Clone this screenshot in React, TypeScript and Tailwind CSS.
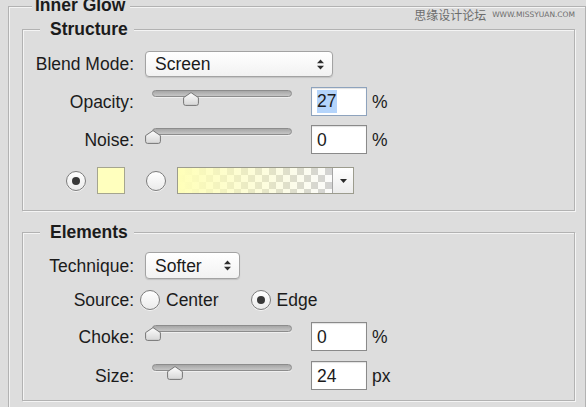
import React from "react";

const ETCH = "border border-[#b2b2b2] shadow-[inset_1px_1px_0_#f4f4f4,1px_1px_0_#f4f4f4]";

function Label({ children }: { children: React.ReactNode }) {
  return <span className="w-[111px] shrink-0 text-right">{children}</span>;
}

function Arrows() {
  return (
    <svg width="7" height="11" viewBox="0 0 7 11" className="shrink-0">
      <path d="M0 4.2 L3.5 0.5 L7 4.2 Z M0 6.8 L3.5 10.5 L7 6.8 Z" fill="#2e2e2e" />
    </svg>
  );
}

function Select({ value, width, height }: { value: string; width: string; height: string }) {
  return (
    <div
      className={`ml-[11px] flex ${width} ${height} items-center justify-between rounded-[4px] border border-[#a3a3a3] bg-gradient-to-b from-white to-[#f2f2f2] pl-[9px] pr-[8px] shadow-[0_1px_1px_rgba(0,0,0,0.12)]`}
    >
      <span>{value}</span>
      <Arrows />
    </div>
  );
}

function Thumb({ left }: { left: number }) {
  return (
    <svg width="16" height="14" viewBox="0 0 16 14" className="absolute top-[1px]" style={{ left: left - 8 }}>
      <defs>
        <linearGradient id="thumbFill" x1="0" y1="0" x2="0" y2="1">
          <stop offset="0" stopColor="#fdfdfd" />
          <stop offset="1" stopColor="#d6d6d6" />
        </linearGradient>
      </defs>
      <path
        d="M8 0.6 L15.4 5.6 V11.4 Q15.4 13.4 13.4 13.4 H2.6 Q0.6 13.4 0.6 11.4 V5.6 Z"
        fill="url(#thumbFill)"
        stroke="#757575"
        strokeWidth="1"
      />
    </svg>
  );
}

function Slider({ pos }: { pos: number }) {
  return (
    <div className="self-start pl-[18px] pr-[19px] pt-[3px]">
      <div className="relative h-[7px] w-[140px] rounded-full border border-[#8c8c8c] bg-gradient-to-b from-[#a6a6a6] to-[#c6c6c6] shadow-[0_1px_0_#efefef]">
        <Thumb left={pos} />
      </div>
    </div>
  );
}

function NumBox({ value, focused }: { value: string; focused?: boolean }) {
  return (
    <div
      className={`flex h-[29px] w-[56px] shrink-0 items-center bg-white pl-[5px] shadow-[inset_0_1px_1px_rgba(0,0,0,0.12)] ${
        focused ? "border border-[#8ea3bd]" : "border border-[#8a8a8a]"
      }`}
    >
      <span className={focused ? "bg-[#b4d4fb] pr-[1px] leading-[23px]" : ""}>{value}</span>
    </div>
  );
}

function SliderRow({ label, pos, value, unit, focused, className }: {
  label: string;
  pos: number;
  value: string;
  unit: string;
  focused?: boolean;
  className: string;
}) {
  return (
    <div className={`flex items-center ${className}`}>
      <Label>{label}</Label>
      <Slider pos={pos} />
      <NumBox value={value} focused={focused} />
      <span className="ml-[5px]">{unit}</span>
    </div>
  );
}

function Radio({ on }: { on?: boolean }) {
  return (
    <span className="flex h-[20px] w-[20px] shrink-0 items-center justify-center rounded-full border border-[#7c7c7c] bg-gradient-to-b from-white to-[#ebebeb] shadow-[0_1px_0_rgba(255,255,255,0.7)]">
      {on && <span className="h-[8px] w-[8px] rounded-full bg-[#383838]" />}
    </span>
  );
}

export default function App() {
  return (
    <div className="relative h-[407px] w-[586px] overflow-hidden bg-[#dddddd] pl-[8px] font-['Liberation_Sans',Arial,sans-serif] text-[17.5px] leading-[20px] text-[#1b1b1b]">
      {/* watermark */}
      <div className="absolute right-[11px] top-[7px] flex items-center gap-[6px] text-[#6c6c6c]">
        <span className="font-['Noto_Sans_CJK_SC',sans-serif] text-[12px] leading-[16px]">思缘设计论坛</span>
        <span className="font-['DejaVu_Sans',sans-serif] text-[7.5px] leading-[16px]">WWW.MISSYUAN.COM</span>
      </div>

      <fieldset className={`-mt-[5px] pb-[20px] pl-[13px] pr-[10px] ${ETCH}`}>
        <legend className="ml-[10px] bg-[#dddddd] pb-[2px] pl-[3px] pr-[5px] font-bold">Inner Glow</legend>

        {/* Structure */}
        <fieldset className={`mt-[2px] ${ETCH}`}>
          <legend className="ml-[17px] bg-[#dddddd] pl-[10px] pr-[6px] font-bold">Structure</legend>
          <div className="flex flex-col pb-[16px] pt-[12px]">
            <div className="flex h-[26px] items-center">
              <Label>Blend Mode:</Label>
              <Select value="Screen" width="w-[188px]" height="h-[26px]" />
            </div>
            <SliderRow className="mt-[10px]" label="Opacity:" pos={38} value="27" unit="%" focused />
            <SliderRow className="mt-[9px]" label="Noise:" pos={0} value="0" unit="%" />
            <div className="mt-[13px] flex h-[27px] items-center">
              <span className="ml-[43px]">
                <Radio on />
              </span>
              <span className="ml-[11px] h-[27px] w-[28px] border border-[#a5a58f] bg-[#ffffbe]" />
              <span className="ml-[21px]">
                <Radio />
              </span>
              <div className="ml-[11px] flex h-[27px] w-[177px] border border-[#9c9c8e]">
                <span className="flex-1 [background:linear-gradient(to_right,#ffffb8,rgba(255,255,184,0.55)_45%,rgba(255,255,184,0)),conic-gradient(#d2d2d2_25%,#fbfbfb_0_50%,#d2d2d2_0_75%,#fbfbfb_0)_0_0/14px_14px]" />
                <span className="flex w-[21px] items-center justify-center border-l border-[#a5a5a5] bg-gradient-to-b from-white to-[#ececec]">
                  <svg width="7" height="4" viewBox="0 0 7 4">
                    <path d="M0 0 L7 0 L3.5 4 Z" fill="#2a2a2a" />
                  </svg>
                </span>
              </div>
            </div>
          </div>
        </fieldset>

        {/* Elements */}
        <fieldset className={`mt-[11px] ${ETCH}`}>
          <legend className="ml-[17px] bg-[#dddddd] pl-[10px] pr-[6px] font-bold">Elements</legend>
          <div className="flex flex-col pb-[10px] pt-[10px]">
            <div className="flex h-[27px] items-center">
              <Label>Technique:</Label>
              <Select value="Softer" width="w-[95px]" height="h-[27px]" />
            </div>
            <div className="mt-[10px] flex h-[22px] items-center">
              <Label>Source:</Label>
              <span className="ml-[6px]">
                <Radio />
              </span>
              <span className="ml-[6px]">Center</span>
              <span className="ml-[32px]">
                <Radio on />
              </span>
              <span className="ml-[6px]">Edge</span>
            </div>
            <SliderRow className="mt-[11px]" label="Choke:" pos={0} value="0" unit="%" />
            <SliderRow className="mt-[10px]" label="Size:" pos={22} value="24" unit="px" />
          </div>
        </fieldset>
      </fieldset>
    </div>
  );
}
